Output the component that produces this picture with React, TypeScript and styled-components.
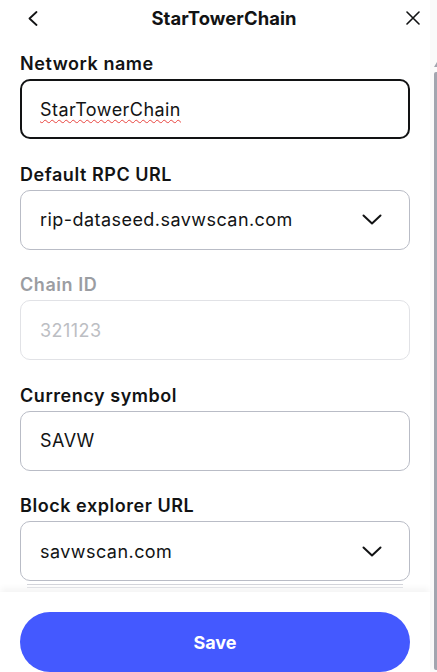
import styled, { createGlobalStyle } from "styled-components";

const GlobalStyle = createGlobalStyle`
  html, body {
    margin: 0;
    padding: 0;
    background: #ffffff;
  }
  body {
    font-family: Inter, "Noto Sans", "Liberation Sans", sans-serif;
    color: #121314;
  }
`;

const Shell = styled.div`
  display: flex;
  width: 437px;
  height: 672px;
  overflow: hidden;
  background: #ffffff;
`;

const Main = styled.div`
  width: 430px;
  display: flex;
  flex-direction: column;
`;

const Header = styled.header`
  height: 36px;
  display: grid;
  grid-template-columns: 1fr auto 1fr;
  align-items: center;
  padding-left: 18px;
`;

const IconButton = styled.button<{ $side: "left" | "right" }>`
  border: 0;
  background: none;
  padding: 0;
  display: flex;
  cursor: pointer;
  justify-self: ${(p) => (p.$side === "left" ? "start" : "end")};
  margin: ${(p) => (p.$side === "left" ? "0 0 0 10px" : "0 10px 0 0")};
`;

const Title = styled.h1`
  margin: 0;
  font-size: 18.4px;
  font-weight: 700;
  letter-spacing: 0.1px;
`;

const Body = styled.div`
  flex: 1;
  min-height: 0;
  overflow: hidden;
  padding: 16px 20px 0;
`;

const Field = styled.div`
  margin-bottom: 23.5px;
`;

const Label = styled.div<{ $disabled?: boolean }>`
  font-size: 18px;
  line-height: 24px;
  font-weight: 600;
  letter-spacing: 0.55px;
  margin-bottom: 3px;
  color: ${(p) => (p.$disabled ? "#9b9da2" : "#121314")};
`;

const Box = styled.div<{ $focused?: boolean; $disabled?: boolean }>`
  box-sizing: border-box;
  height: 60px;
  display: flex;
  align-items: center;
  justify-content: space-between;
  padding: 0 27px 0 ${(p) => (p.$focused ? "18px" : "19px")};
  border-radius: 10px;
  border: ${(p) =>
    p.$focused
      ? "2px solid #121314"
      : p.$disabled
      ? "1px solid #e1e2e6"
      : "1px solid #b9bcc6"};
  font-size: 18px;
  letter-spacing: 0.45px;
  color: ${(p) => (p.$disabled ? "#bcbec3" : "#121314")};
`;

const Misspelled = styled.span`
  text-decoration: underline wavy #e8443f;
  text-decoration-thickness: 1px;
  text-underline-offset: 3px;
`;

const StackEdge = styled.div`
  height: 2px;
  margin: -21px 7px 0;
  border-top: 1px solid #d4d5db;
  border-bottom: 1px solid #e4e5e9;
`;

const Footer = styled.footer`
  position: relative;
  padding: 20px 20px 0;
  height: 80px;
  box-sizing: border-box;
  background: #ffffff;
  box-shadow: 0 -5px 6px -1px rgba(0, 0, 0, 0.045);
`;

const SaveButton = styled.button`
  width: 100%;
  height: 60px;
  border: 0;
  border-radius: 30px;
  background: #4459ff;
  color: #ffffff;
  font-family: inherit;
  font-size: 18px;
  font-weight: 700;
  cursor: pointer;
`;

const ScrollTrack = styled.div`
  width: 7px;
  background: #fafafa;
  display: flex;
  flex-direction: column;
  align-items: flex-end;
  padding-top: 62px;
`;

const ScrollArrow = styled.div`
  width: 0;
  height: 0;
  border-left: 3px solid transparent;
  border-bottom: 5px solid #a2a5af;
`;

const ScrollThumb = styled.div`
  margin-top: 5px;
  width: 3.5px;
  height: 598px;
  background: #a2a5af;
  border-radius: 2px 0 0 2px;
`;

const Chevron = () => (
  <svg width="20" height="11" viewBox="0 0 20 11" fill="none">
    <polyline
      points="1.5,1.5 10,9.5 18.5,1.5"
      stroke="#121314"
      strokeWidth="2"
      strokeLinecap="round"
      strokeLinejoin="round"
    />
  </svg>
);

const fields = [
  { label: "Default RPC URL", value: "rip-dataseed.savwscan.com", select: true },
  { label: "Chain ID", value: "321123", disabled: true },
  { label: "Currency symbol", value: "SAVW" },
  { label: "Block explorer URL", value: "savwscan.com", select: true },
];

export default function App() {
  return (
    <Shell>
      <GlobalStyle />
      <Main>
        <Header>
          <IconButton $side="left" aria-label="Back">
            <svg width="10" height="15" viewBox="0 0 10 15" fill="none">
              <polyline
                points="8.5,1 1.5,7.5 8.5,14"
                stroke="#121314"
                strokeWidth="1.8"
                strokeLinecap="round"
                strokeLinejoin="round"
              />
            </svg>
          </IconButton>
          <Title>StarTowerChain</Title>
          <IconButton $side="right" aria-label="Close">
            <svg width="14" height="14" viewBox="0 0 14 14" fill="none">
              <path
                d="M1 1 L13 13 M13 1 L1 13"
                stroke="#121314"
                strokeWidth="1.6"
                strokeLinecap="round"
              />
            </svg>
          </IconButton>
        </Header>
        <Body>
          <Field>
            <Label>Network name</Label>
            <Box $focused>
              <Misspelled>StarTowerChain</Misspelled>
            </Box>
          </Field>
          {fields.map((f) => (
            <Field key={f.label}>
              <Label $disabled={f.disabled}>{f.label}</Label>
              <Box $disabled={f.disabled}>
                <span>{f.value}</span>
                {f.select && <Chevron />}
              </Box>
            </Field>
          ))}
          <StackEdge />
        </Body>
        <Footer>
          <SaveButton>Save</SaveButton>
        </Footer>
      </Main>
      <ScrollTrack>
        <ScrollArrow />
        <ScrollThumb />
      </ScrollTrack>
    </Shell>
  );
}
